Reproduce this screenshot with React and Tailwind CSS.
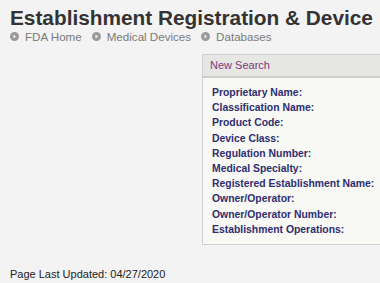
const fields = [
  "Proprietary Name:",
  "Classification Name:",
  "Product Code:",
  "Device Class:",
  "Regulation Number:",
  "Medical Specialty:",
  "Registered Establishment Name:",
  "Owner/Operator:",
  "Owner/Operator Number:",
  "Establishment Operations:",
];

function Bullet() {
  return (
    <svg width="9" height="9" viewBox="0 0 9 9" className="shrink-0">
      <circle cx="4.5" cy="4.5" r="4.5" fill="#9a9a9a" />
      <path d="M3.5 2.5 L6 4.5 L3.5 6.5 Z" fill="#f3f3f3" />
    </svg>
  );
}

export default function App() {
  return (
    <div
      className="w-[380px] h-[283px] overflow-hidden bg-[#f3f3f3] relative"
      style={{ fontFamily: '"Liberation Sans", Arial, sans-serif' }}
    >
      <div className="pl-[10px] pt-[6px]">
        <h1 className="text-[20.8px] leading-[24px] font-bold text-[#333] whitespace-nowrap">
          Establishment Registration &amp; Device
        </h1>
        <div className="flex items-center gap-[6px] text-[11.6px] leading-[13px] text-[#7a7a7a]">
          <Bullet />
          <span className="mr-[4px]">FDA Home</span>
          <Bullet />
          <span className="mr-[4px]">Medical Devices</span>
          <Bullet />
          <span>Databases</span>
        </div>
      </div>

      <div className="ml-[202px] mt-[11px] w-[200px] border border-[#cfcfcf] bg-[#f8f8f4]">
        <div className="h-[23px] bg-[#e6e6e3] border-b-2 border-[#cdcdca] pl-[7px] flex items-center text-[11px] text-[#7b3a80]">
          New Search
        </div>
        <ul className="pl-[9px] pt-[7px] pb-[7px] text-[10.4px] leading-[15.2px] font-bold text-[#2e2e70]">
          {fields.map((f) => (
            <li key={f} className="whitespace-nowrap">{f}</li>
          ))}
        </ul>
      </div>

      <div className="absolute left-[10px] top-[266px] text-[11px] text-[#222]">
        Page Last Updated: 04/27/2020
      </div>
    </div>
  );
}
